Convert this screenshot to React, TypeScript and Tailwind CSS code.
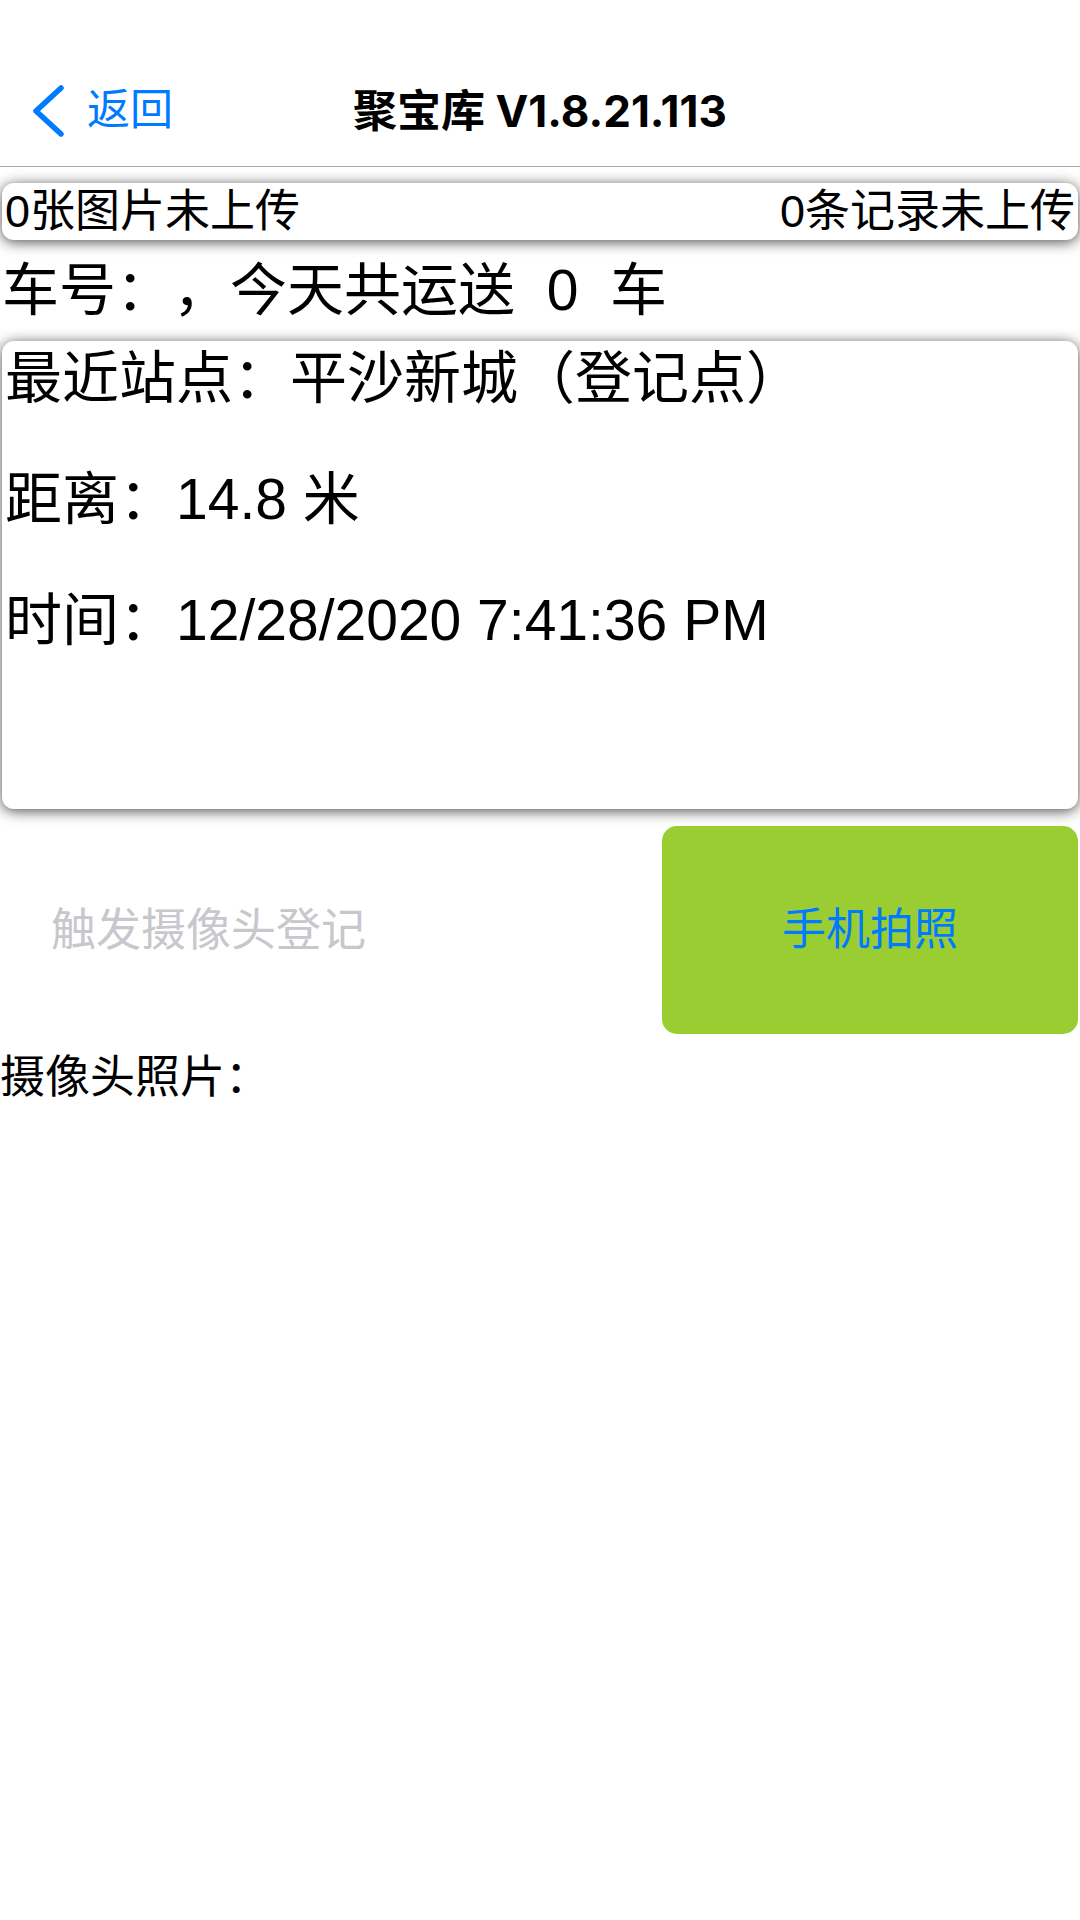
import type { ReactNode } from "react";

const sans = "font-['Liberation_Sans','Noto_Sans_CJK_SC',sans-serif]";

function BackChevron() {
  return (
    <svg width="34" height="52" viewBox="0 0 34 52" className="shrink-0">
      <polyline
        points="30,3 5,26 30,49"
        fill="none"
        stroke="#007AFF"
        strokeWidth="5.5"
        strokeLinecap="round"
        strokeLinejoin="round"
      />
    </svg>
  );
}

function Card({ className, children }: { className: string; children: ReactNode }) {
  return (
    <div className={`bg-white rounded-[12px] shadow-[0_2px_14px_rgba(0,0,0,0.7)] ${className}`}>{children}</div>
  );
}

export default function App() {
  return (
    <div className={`w-[1080px] h-[1920px] bg-white text-black [text-spacing-trim:space-all] ${sans}`}>
      <header className="pt-[55px] h-[167px] border-b border-[#a8a8a8]">
        <div className="grid grid-cols-[1fr_auto_1fr] items-center h-[111px]">
          <button className="flex items-center gap-[22px] pl-[31px] text-[#007AFF] text-[43px] leading-none">
            <BackChevron />
            <span>返回</span>
          </button>
          <h1 className="font-['Inter','Noto_Sans_CJK_SC',sans-serif] font-bold text-[44px] leading-none">
            聚宝库 V1.8.21.113
          </h1>
          <div />
        </div>
      </header>

      <main className="px-[2px]">
        <Card className="mt-[16px] h-[57px] flex items-center justify-between px-[3px] text-[45px] leading-none">
          <span>0张图片未上传</span>
          <span>0条记录未上传</span>
        </Card>

        <p className="h-[101px] leading-[101px] text-[57px] whitespace-pre">车号：，今天共运送  0  车</p>

        <Card className="h-[468px] flex flex-col gap-[46px] px-[3px] text-[57px]">
          <p className="leading-[75px]">最近站点：平沙新城（登记点）</p>
          <p className="leading-[75px]">距离：14.8 米</p>
          <p className="leading-[75px]">时间：12/28/2020 7:41:36 PM</p>
        </Card>

        <div className="mt-[17px] flex h-[208px]">
          <button className="flex-1 flex items-center pl-[49px] text-[45px] text-[#c7c7cc] leading-none">
            触发摄像头登记
          </button>
          <button className="w-[416px] rounded-[15px] bg-[#9ACD32] text-[#007AFF] text-[44px] leading-none flex items-center justify-center">
            手机拍照
          </button>
        </div>

        <p className="leading-[88px] text-[45px] -ml-[2px]">摄像头照片：</p>
      </main>
    </div>
  );
}
